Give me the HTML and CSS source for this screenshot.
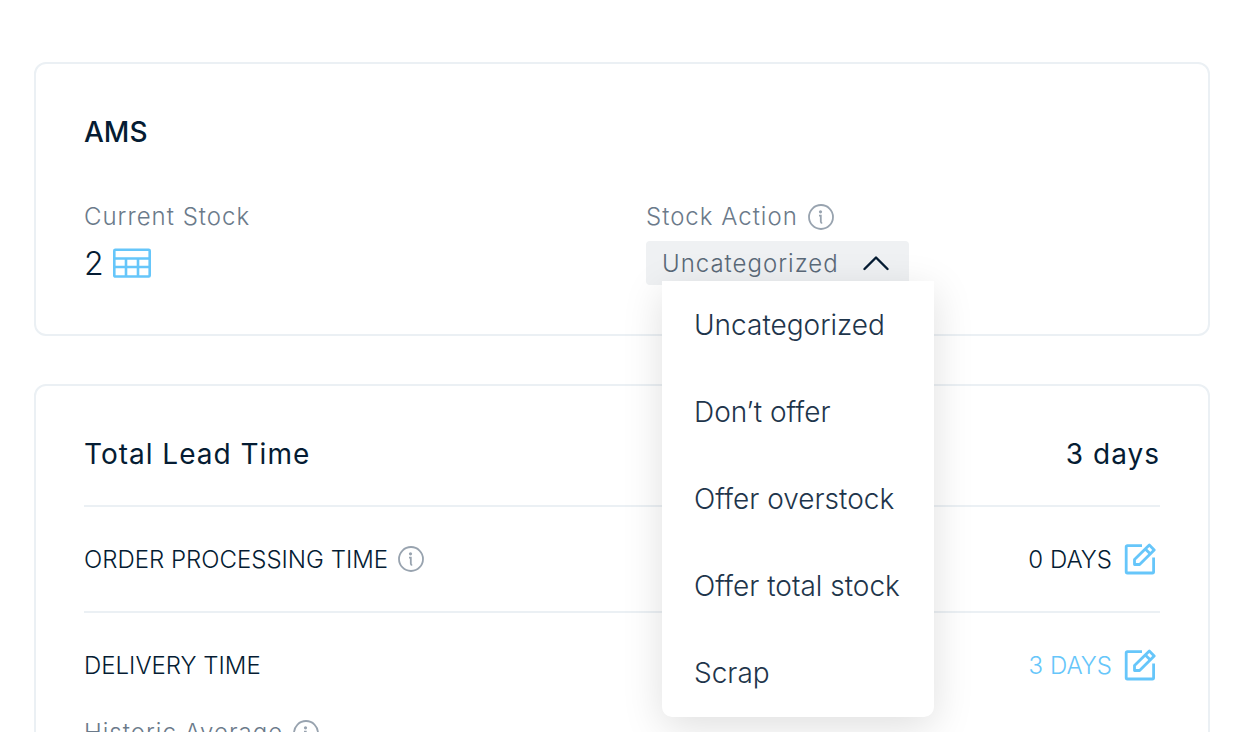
FILE: index.html
```html
<!DOCTYPE html>
<html lang="en">
<head>
  <meta charset="UTF-8">
  <meta name="viewport" content="width=device-width, initial-scale=1.0">
  <title>Stock overview</title>
  <link rel="stylesheet" href="styles.css">
</head>
<body>
  <!-- Shared icons -->
  <svg class="sprite" aria-hidden="true">
    <symbol id="icon-info" viewBox="0 0 26 26">
      <circle cx="13" cy="13" r="12" fill="none" stroke="currentColor" stroke-width="1.8"/>
      <circle cx="12.5" cy="7.8" r="1.6" fill="currentColor"/>
      <path d="M11 11.6h1.8v6q0 1.4 1.4 1.4" fill="none" stroke="currentColor" stroke-width="1.8"/>
    </symbol>
    <symbol id="icon-edit" viewBox="0 0 32 32">
      <g fill="none" stroke="currentColor" stroke-width="2.8" stroke-linejoin="round">
        <path d="M18 2.600H3.400Q2.200 2.600 2.200 3.800V28.800Q2.200 30 3.400 30H28.400Q29.600 30 29.600 28.800V14.500"/>
        <path d="M10.500 21.500V16.500L25.300 2L30.200 6.900L15.600 21.500Z"/>
        <path d="M21.300 5.900L26.400 11"/>
      </g>
    </symbol>
  </svg>

  <main class="page">
    <!-- Stock card -->
    <section class="card stock">
      <h2 class="card-title">AMS</h2>
      <div class="stock-grid">
        <div class="field">
          <div class="label">Current Stock</div>
          <div class="stock-value">
            <span>2</span>
            <button class="icon-button" type="button" aria-label="Show stock table">
              <svg class="icon-table" viewBox="0 0 38 30">
                <g fill="none" stroke="currentColor" stroke-width="2.600">
                  <rect x="1.300" y="1.700" width="35.400" height="26.800" rx="1"/>
                  <path d="M1 10.500H37M1 19H37M13 10.500V28.500M25 10.500V28.500"/>
                </g>
              </svg>
            </button>
          </div>
        </div>

        <div class="field">
          <div class="label">
            <span id="action-label">Stock Action</span>
            <svg class="icon-info"><use href="#icon-info"/></svg>
          </div>
          <div class="dropdown">
            <button class="dropdown-toggle" type="button" aria-haspopup="true" aria-expanded="true" aria-describedby="action-label">
              <span>Uncategorized</span>
              <svg class="icon-chevron" viewBox="0 0 26 16">
                <path d="M1.500 14L13 2.500L24.500 14" fill="none" stroke="currentColor" stroke-width="2.400" stroke-linecap="round" stroke-linejoin="round"/>
              </svg>
            </button>
            <ul class="dropdown-menu">
              <li><button type="button">Uncategorized</button></li>
              <li><button type="button">Don’t offer</button></li>
              <li><button type="button">Offer overstock</button></li>
              <li><button type="button">Offer total stock</button></li>
              <li><button type="button">Scrap</button></li>
            </ul>
          </div>
        </div>
      </div>
    </section>

    <!-- Lead time card -->
    <section class="card lead-time">
      <div class="lead-total">
        <h2>Total Lead Time</h2>
        <span>3 days</span>
      </div>
      <div class="row">
        <div class="row-name">
          <span>ORDER PROCESSING TIME</span>
          <svg class="icon-info"><use href="#icon-info"/></svg>
        </div>
        <div class="row-value">
          <span>0 DAYS</span>
          <button class="icon-button" type="button" aria-label="Edit order processing time">
            <svg class="icon-edit"><use href="#icon-edit"/></svg>
          </button>
        </div>
      </div>
      <div class="row">
        <div class="row-name">DELIVERY TIME</div>
        <div class="row-value changed">
          <span>3 DAYS</span>
          <button class="icon-button" type="button" aria-label="Edit delivery time">
            <svg class="icon-edit"><use href="#icon-edit"/></svg>
          </button>
        </div>
      </div>
      <div class="label">
        <span>Historic Average</span>
        <svg class="icon-info"><use href="#icon-info"/></svg>
      </div>
    </section>
  </main>
</body>
</html>
```
FILE: styles.css
```css
* {
  box-sizing: border-box;
}

body {
  margin: 0;
  height: 100vh;
  overflow: hidden;
  background: #fff;
  color: #051c33;
  font-family: "Inter", "Open Sans", sans-serif;
  font-size: 24px;
  font-weight: 300;
}

h2,
ul {
  margin: 0;
  padding: 0;
}

button {
  border: none;
  background: none;
  color: inherit;
  font: inherit;
  cursor: pointer;
}

svg {
  display: block;
  flex: none;
}

.sprite {
  position: absolute;
  width: 0;
  height: 0;
}

.page {
  display: flex;
  flex-direction: column;
  gap: 48px;
  padding: 62px 48px 48px 34px;
}

/* Cards */
.card {
  padding: 48px;
  border: 2px solid #ebf0f4;
  border-radius: 12px;
}

.card-title {
  margin-bottom: 49px;
  font-size: 28px;
  font-weight: 500;
  line-height: 40px;
}

.stock {
  padding-bottom: 49px;
}

.stock-grid {
  display: grid;
  grid-template-columns: 1fr 1fr;
  gap: 48px;
}

.field {
  display: flex;
  flex-direction: column;
  gap: 8px;
}

.label {
  display: flex;
  align-items: center;
  gap: 10px;
  color: #6b7a8a;
  letter-spacing: 1px;
  line-height: 32px;
}

.stock-value {
  display: flex;
  align-items: center;
  gap: 9px;
  height: 44px;
  font-size: 32px;
}

/* Icons */
.icon-button {
  padding: 0;
  color: #66c6fa;
}

.icon-info {
  width: 26px;
  height: 26px;
  color: #98a3af;
}

.icon-table {
  width: 38px;
  height: 30px;
}

.icon-edit {
  width: 32px;
  height: 32px;
}

.icon-chevron {
  width: 26px;
  height: 16px;
  color: #051c33;
}

/* Stock action dropdown */
.dropdown {
  position: relative;
  align-self: flex-start;
}

.dropdown-toggle {
  display: flex;
  align-items: center;
  gap: 24px;
  height: 44px;
  padding: 0 20px 0 16px;
  border-radius: 4px;
  background: #eff1f3;
  color: #5a6978;
  letter-spacing: 1px;
}

.dropdown-menu {
  position: absolute;
  top: 40px;
  left: 16px;
  z-index: 1;
  width: 272px;
  padding-bottom: 1px;
  border-radius: 0 0 10px 10px;
  background: #fff;
  box-shadow: 0 10px 40px rgba(0, 0, 0, 0.13);
  list-style: none;
}

.dropdown-menu button {
  display: block;
  width: 100%;
  height: 87px;
  padding: 0 32px;
  color: #1e354b;
  font-size: 28px;
  text-align: left;
  white-space: nowrap;
}

/* Lead time */
.lead-total,
.row {
  display: flex;
  align-items: center;
  justify-content: space-between;
  border-bottom: 2px solid #ebf0f4;
}

.lead-total {
  padding-bottom: 31px;
  letter-spacing: 1px;
  line-height: 40px;
}

.lead-total,
.lead-total h2 {
  font-size: 28px;
  font-weight: 400;
}

.row {
  height: 106px;
}

.row:nth-child(3) {
  height: 104px;
  border-bottom: none;
}

.row-name,
.row-value {
  display: flex;
  align-items: center;
}

.row-name {
  gap: 10px;
}

.row-value {
  gap: 12px;
  padding-right: 4px;
}

.changed {
  color: #66c6fa;
}
```
